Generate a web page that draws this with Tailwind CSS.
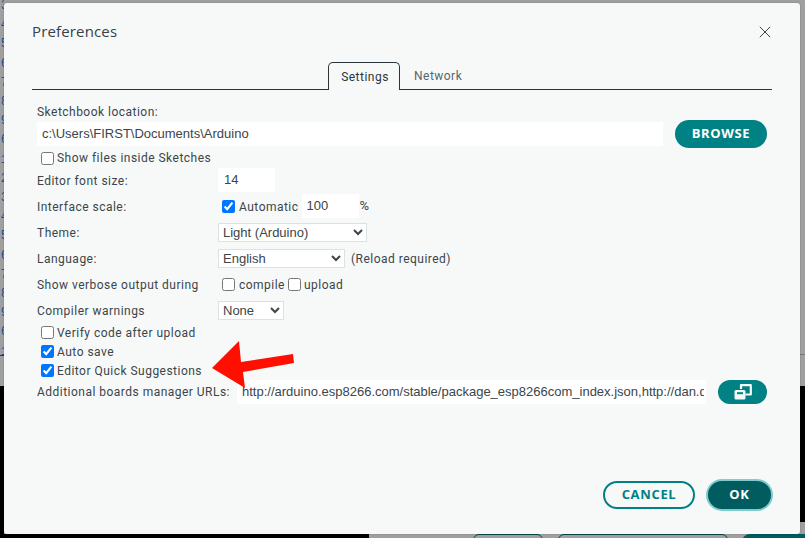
<!DOCTYPE html>
<html lang="en">
<head>
    <meta charset="UTF-8">
    <meta name="viewport" content="width=device-width, initial-scale=1.0">
    <title>Preferences</title>
    <script src="https://cdn.jsdelivr.net/npm/@tailwindcss/browser@4"></script>
</head>
<body class="relative w-[805px] h-[538px] overflow-hidden bg-[#a0a0a0] font-['Roboto',sans-serif] text-[12px] tracking-[0.04em] text-[#3b454a]">
    <!-- IDE behind the dialog -->
    <div class="absolute left-0 top-[-3px] w-[4px] h-[360px] overflow-hidden text-right font-['Liberation_Mono',monospace] text-[12px] leading-[19.2px] tracking-normal text-[#1d4f9c]">
        <div class="w-[8px]">3<br>4<br>5<br>6<br>7<br>8<br>9<br>6<br>1<br>2<br>3<br>4<br>5<br>6<br>7<br>8<br>9<br>6<br>1</div>
    </div>
    <div class="absolute left-0 top-[355px] w-[4px] h-px bg-[#333]"></div>
    <div class="absolute left-0 top-[386px] w-[4px] h-[152px] bg-black"></div>
    <div class="absolute left-0 top-[534px] w-[369px] h-[4px] bg-black"></div>
    <div class="absolute right-0 top-[386px] w-[5px] h-[136px] bg-black"></div>
    <div class="absolute right-0 top-[354px] w-[5px] h-px bg-[#777]"></div>
    <div class="absolute left-[473px] top-[534px] w-[70px] h-[12px] rounded-full border border-[#00474a]"></div>
    <div class="absolute left-[558px] top-[534px] w-[170px] h-[12px] rounded-full border border-[#00474a]"></div>
    <div class="absolute left-[742px] top-[534px] w-[80px] h-[12px] rounded-t-lg bg-[#005c5f]"></div>

    <!-- dialog -->
    <main class="relative ml-[4px] top-[3px] w-[796px] h-[531px] rounded-[3px] bg-[#f7f9f9] shadow-[0_0_2px_rgba(0,0,0,0.25)]">
        <header class="flex items-center justify-between h-[56px] pl-[28px] pr-[29px]">
            <h1 class="font-['Open_Sans',sans-serif] text-[15px] tracking-[0.01em] text-[#374146]">Preferences</h1>
            <svg class="relative top-px w-[12px] h-[12px] text-[#374146]" viewBox="0 0 12 12" fill="none" stroke="currentColor" stroke-width="1"><path d="M0.8 0.8 11.2 11.2M11.2 0.8 0.8 11.2"/></svg>
        </header>

        <!-- tabs -->
        <nav class="flex items-end h-[31px] mx-[28px] w-[740px] border-b border-[#2c3539]">
            <div class="w-[296px]"></div>
            <div class="flex items-center justify-center w-[72px] h-[28px] -mb-px pl-[2px] rounded-t-[5px] border border-b-0 border-[#2c3539] bg-[#f7f9f9] text-[#2c3539]">Settings</div>
            <div class="flex items-center h-[27px] pl-[14px] text-[#5a656a]">Network</div>
        </nav>

        <div class="relative h-[444px] pl-[33px]">
            <!-- sketchbook -->
            <div class="flex items-center h-[16px] mt-[14px]">Sketchbook location:</div>
            <div class="flex items-center h-[28px]">
                <input value="c:\Users\FIRST\Documents\Arduino" class="w-[626px] h-[24px] bg-white pl-[5px] pb-[2px] font-['Liberation_Sans',sans-serif] text-[13px] tracking-normal">
                <button class="ml-[12px] w-[92px] h-[28px] rounded-full bg-[#008184] text-white font-['Open_Sans',sans-serif] font-bold text-[13px] tracking-[0.05em]">BROWSE</button>
            </div>
            <label class="flex items-center h-[16px] mt-[2px] pl-[4px]"><input type="checkbox" class="w-[13px] h-[13px] accent-[#0075ff]"><span class="ml-[3px]">Show files inside Sketches</span></label>

            <!-- settings rows -->
            <div class="flex items-center h-[24px] mt-[2px]">
                <span class="relative top-px w-[181px]">Editor font size:</span>
                <input value="14" class="w-[57px] h-[24px] bg-white pl-[6px] pb-[2px] font-['Liberation_Sans',sans-serif] text-[13px] tracking-normal">
            </div>
            <div class="flex items-center h-[24px] mt-[2px]">
                <span class="relative top-px w-[185px]">Interface scale:</span>
                <input type="checkbox" checked class="w-[13px] h-[13px] accent-[#0075ff]">
                <span class="relative top-px ml-[4px]">Automatic</span>
                <input value="100" class="ml-[3px] w-[57px] h-[24px] bg-white pl-[5px] pb-[2px] font-['Liberation_Sans',sans-serif] text-[13px] tracking-normal">
                <span class="ml-px text-[13px]">%</span>
            </div>
            <div class="flex items-center h-[26px] mt-[1px]">
                <span class="relative top-px w-[181px]">Theme:</span>
                <select class="w-[149px] h-[19px] bg-white border border-[#dae3e3] font-['Liberation_Sans',sans-serif] text-[13px] tracking-normal"><option>Light (Arduino)</option></select>
            </div>
            <div class="flex items-center h-[26px]">
                <span class="relative top-px w-[181px]">Language:</span>
                <select class="w-[127px] h-[19px] bg-white border border-[#dae3e3] font-['Liberation_Sans',sans-serif] text-[13px] tracking-normal"><option>English</option></select>
                <span class="relative top-px ml-[6px]">(Reload required)</span>
            </div>
            <div class="flex items-center h-[26px]">
                <span class="relative top-px w-[185px]">Show verbose output during</span>
                <input type="checkbox" class="w-[13px] h-[13px] accent-[#0075ff]">
                <span class="relative top-px ml-[4px]">compile</span>
                <input type="checkbox" class="ml-[3px] w-[13px] h-[13px] accent-[#0075ff]">
                <span class="relative top-px ml-[3px]">upload</span>
            </div>
            <div class="flex items-center h-[26px]">
                <span class="relative top-px w-[181px]">Compiler warnings</span>
                <select class="w-[66px] h-[19px] bg-white border border-[#dae3e3] font-['Liberation_Sans',sans-serif] text-[13px] tracking-normal"><option>None</option></select>
            </div>

            <!-- checks -->
            <label class="flex items-center h-[19px] pl-[4px]"><input type="checkbox" class="w-[13px] h-[13px] accent-[#0075ff]"><span class="ml-[3px]">Verify code after upload</span></label>
            <label class="flex items-center h-[19px] pl-[4px]"><input type="checkbox" checked class="w-[13px] h-[13px] accent-[#0075ff]"><span class="ml-[3px]">Auto save</span></label>
            <label class="flex items-center h-[19px] pl-[4px]"><input type="checkbox" checked class="w-[13px] h-[13px] accent-[#0075ff]"><span class="ml-[3px]">Editor Quick Suggestions</span></label>

            <!-- boards urls -->
            <div class="flex items-center h-[24px]">
                <span class="w-[200px] whitespace-nowrap">Additional boards manager URLs:</span>
                <input value="http://arduino.esp8266.com/stable/package_esp8266com_index.json,http://dan.drown.org/stm32duino/package_STM32duino_index.json" class="w-[469px] h-[24px] bg-white pl-[5px] pr-[2px] pb-[2px] font-['Liberation_Sans',sans-serif] text-[13px] tracking-normal">
                <button class="flex items-center justify-center ml-[12px] w-[49px] h-[24px] rounded-full bg-[#008184]">
                    <svg class="w-[18px] h-[16px]" viewBox="0 0 18 16" fill="none"><path d="M7 5V1.2H16.8V10.5H11.5" stroke="#f4fbfb" stroke-width="2.2" stroke-linejoin="round"/><rect x="0.5" y="6" width="11" height="9.5" rx="1.5" fill="#f4fbfb"/><rect x="3" y="8.2" width="6" height="2" fill="#008184"/></svg>
                </button>
            </div>

            <!-- footer buttons -->
            <div class="absolute right-[27px] bottom-[37px] flex items-center gap-[11px]">
                <button class="w-[92px] h-[28px] rounded-full border-2 border-[#008184] text-[#008184] font-['Open_Sans',sans-serif] font-bold text-[13px] tracking-[0.05em]">CANCEL</button>
                <button class="w-[67px] h-[32px] rounded-full bg-[#005c5f] border-2 border-[#7fcbcd] text-white font-['Open_Sans',sans-serif] font-bold text-[13px] tracking-[0.05em]">OK</button>
            </div>
        </div>
    </main>

    <!-- red annotation arrow -->
    <svg class="absolute left-[205px] top-[335px] w-[95px] h-[58px]" viewBox="205 335 95 58"><polygon points="212,368 239,341 241,362 293,354 294,363 243,372 245,388" fill="#ff0f00"/></svg>
</body>
</html>
